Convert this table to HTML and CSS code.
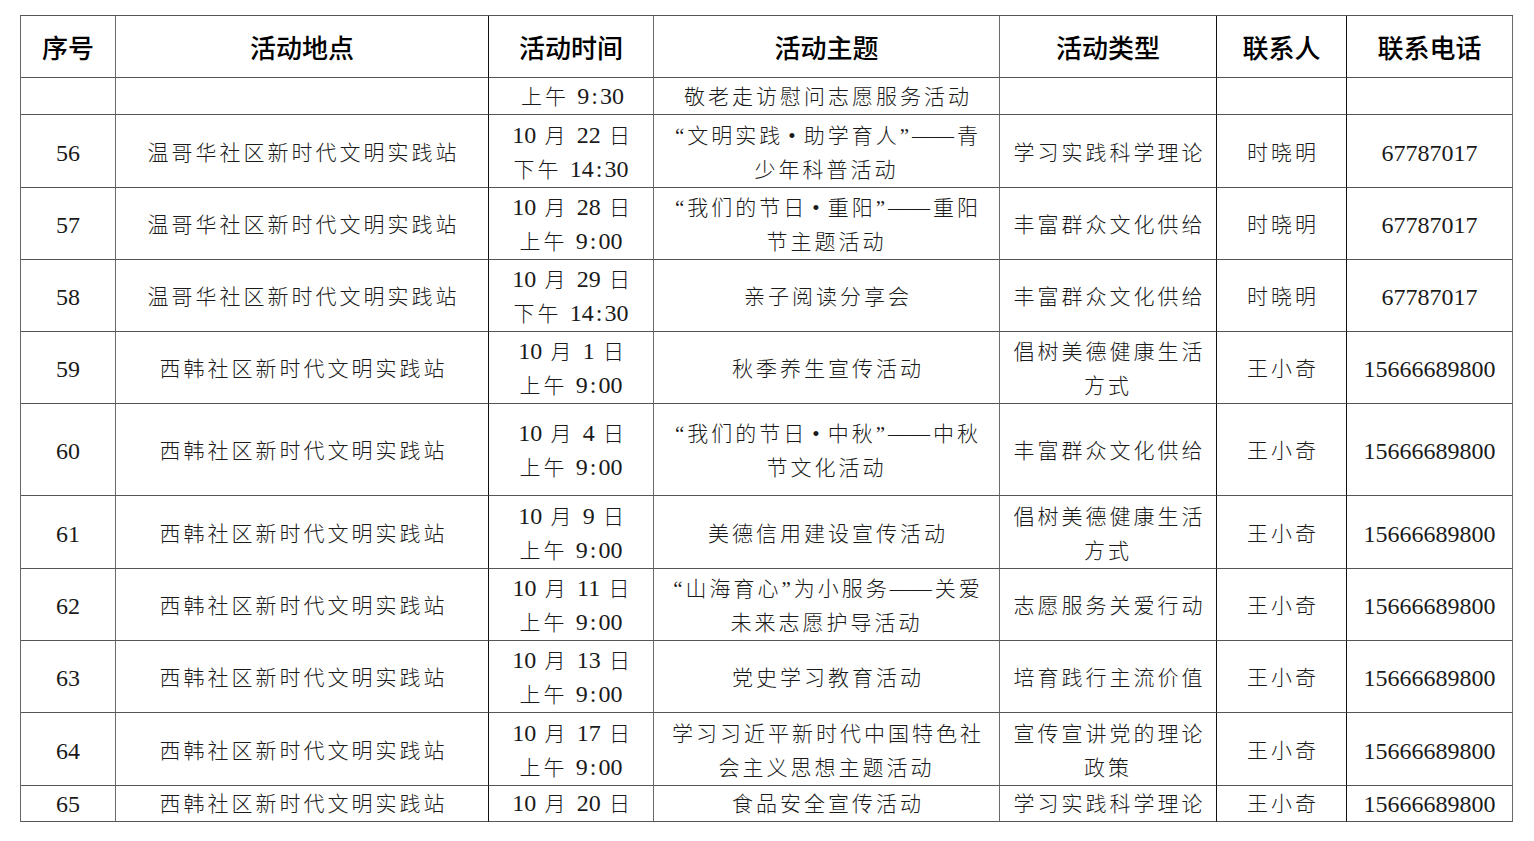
FILE: index.html
```html
<!DOCTYPE html>
<html lang="zh-CN">
<head>
<meta charset="utf-8">
<title>活动安排表</title>
<link rel="stylesheet" href="styles.css">
</head>
<body>
<table class="sheet">
  <colgroup>
    <col class="c1"><col class="c2"><col class="c3"><col class="c4"><col class="c5"><col class="c6"><col class="c7">
  </colgroup>
  <thead>
    <tr class="h-head">
      <th class="g">序号</th><th class="k">活动地点</th><th class="g">活动时间</th><th class="g">活动主题</th><th class="k">活动类型</th><th class="k">联系人</th><th class="g">联系电话</th>
    </tr>
  </thead>
  <tbody>
    <tr class="h37">
      <td class="g num"></td><td class="k"></td><td class="g">上午 <span class="n">9<i>:</i>30</span></td><td class="g">敬老走访慰问志愿服务活动</td><td class="k"></td><td class="k"></td><td class="g num"></td>
    </tr>
    <tr class="h73">
      <td class="g num">56</td><td class="k">温哥华社区新时代文明实践站</td><td class="g"><span class="n">10</span> 月 <span class="n">22</span> 日<br>下午 <span class="n">14<i>:</i>30</span></td><td class="g">“文明实践<span class="d">•</span>助学育人”<span class="m">——</span>青<br>少年科普活动</td><td class="k">学习实践科学理论</td><td class="k">时晓明</td><td class="g num">67787017</td>
    </tr>
    <tr class="h72">
      <td class="g num">57</td><td class="k">温哥华社区新时代文明实践站</td><td class="g"><span class="n">10</span> 月 <span class="n">28</span> 日<br>上午 <span class="n">9<i>:</i>00</span></td><td class="g">“我们的节日<span class="d">•</span>重阳”<span class="m">——</span>重阳<br>节主题活动</td><td class="k">丰富群众文化供给</td><td class="k">时晓明</td><td class="g num">67787017</td>
    </tr>
    <tr class="h72">
      <td class="g num">58</td><td class="k">温哥华社区新时代文明实践站</td><td class="g"><span class="n">10</span> 月 <span class="n">29</span> 日<br>下午 <span class="n">14<i>:</i>30</span></td><td class="g">亲子阅读分享会</td><td class="k">丰富群众文化供给</td><td class="k">时晓明</td><td class="g num">67787017</td>
    </tr>
    <tr class="h72">
      <td class="g num">59</td><td class="k">西韩社区新时代文明实践站</td><td class="g"><span class="n">10</span> 月 <span class="n">1</span> 日<br>上午 <span class="n">9<i>:</i>00</span></td><td class="g">秋季养生宣传活动</td><td class="k">倡树美德健康生活<br>方式</td><td class="k">王小奇</td><td class="g num">15666689800</td>
    </tr>
    <tr class="h92">
      <td class="g num">60</td><td class="k">西韩社区新时代文明实践站</td><td class="g"><span class="n">10</span> 月 <span class="n">4</span> 日<br>上午 <span class="n">9<i>:</i>00</span></td><td class="g">“我们的节日<span class="d">•</span>中秋”<span class="m">——</span>中秋<br>节文化活动</td><td class="k">丰富群众文化供给</td><td class="k">王小奇</td><td class="g num">15666689800</td>
    </tr>
    <tr class="h73">
      <td class="g num">61</td><td class="k">西韩社区新时代文明实践站</td><td class="g"><span class="n">10</span> 月 <span class="n">9</span> 日<br>上午 <span class="n">9<i>:</i>00</span></td><td class="g">美德信用建设宣传活动</td><td class="k">倡树美德健康生活<br>方式</td><td class="k">王小奇</td><td class="g num">15666689800</td>
    </tr>
    <tr class="h72">
      <td class="g num">62</td><td class="k">西韩社区新时代文明实践站</td><td class="g"><span class="n">10</span> 月 <span class="n">11</span> 日<br>上午 <span class="n">9<i>:</i>00</span></td><td class="g">“山海育心”为小服务<span class="m">——</span>关爱<br>未来志愿护导活动</td><td class="k">志愿服务关爱行动</td><td class="k">王小奇</td><td class="g num">15666689800</td>
    </tr>
    <tr class="h72">
      <td class="g num">63</td><td class="k">西韩社区新时代文明实践站</td><td class="g"><span class="n">10</span> 月 <span class="n">13</span> 日<br>上午 <span class="n">9<i>:</i>00</span></td><td class="g">党史学习教育活动</td><td class="k">培育践行主流价值</td><td class="k">王小奇</td><td class="g num">15666689800</td>
    </tr>
    <tr class="h73">
      <td class="g num">64</td><td class="k">西韩社区新时代文明实践站</td><td class="g"><span class="n">10</span> 月 <span class="n">17</span> 日<br>上午 <span class="n">9<i>:</i>00</span></td><td class="g">学习习近平新时代中国特色社<br>会主义思想主题活动</td><td class="k">宣传宣讲党的理论<br>政策</td><td class="k">王小奇</td><td class="g num">15666689800</td>
    </tr>
    <tr class="h36">
      <td class="g num">65</td><td class="k">西韩社区新时代文明实践站</td><td class="g"><span class="n">10</span> 月 <span class="n">20</span> 日</td><td class="g">食品安全宣传活动</td><td class="k">学习实践科学理论</td><td class="k">王小奇</td><td class="g num">15666689800</td>
    </tr>
  </tbody>
</table>
</body>
</html>
```

FILE: styles.css
```css
html, body {
  margin: 0;
  padding: 0;
  background: #ffffff;
}

.sheet {
  margin: 15px 0 0 20px;
  width: 1493px;
  table-layout: fixed;
  border-collapse: separate;
  border-spacing: 0;
  border-top: 1px solid #555;
  border-left: 1px solid #666;
  color: #111;
}

.c1 { width: 95px; }
.c2 { width: 373px; }
.c3 { width: 165px; }
.c4 { width: 346px; }
.c5 { width: 217px; }
.c6 { width: 130px; }
.c7 { width: 166px; }

th, td {
  padding: 0;
  text-align: center;
  vertical-align: middle;
  border-bottom: 1px solid #555;
  white-space: nowrap;
  overflow: hidden;
}

td.g, th.g { border-right: 1px solid #6a6a6a; }
td.k, th.k { border-right: 1px solid #111; }

th {
  font-family: "Noto Sans CJK SC", "Noto Sans", sans-serif;
  font-weight: 500;
  font-size: 26px;
  line-height: 30px;
  color: #000;
}

td {
  font-family: "Liberation Serif", "Noto Sans CJK SC", serif;
  font-weight: 300;
  font-size: 21px;
  line-height: 34px;
  letter-spacing: 3px;
  text-indent: 3px;
  padding-top: 3px;
  color: #1a1a1a;
}

.h37 td,
.h36 td {
  padding-top: 1px;
}

td.num {
  font-size: 24px;
  letter-spacing: 0;
  text-indent: 0;
  font-weight: 400;
}

.n {
  font-size: 24px;
  line-height: 1;
  letter-spacing: 0;
  font-weight: 400;
}

.n i {
  font-style: normal;
  padding: 0 2px;
}

.d {
  padding: 0 5px;
}

.m {
  letter-spacing: 0;
  padding-right: 3px;
}

.h-head { height: 62px; }
.h37 { height: 37px; }
.h36 { height: 36px; }
.h72 { height: 72px; }
.h73 { height: 73px; }
.h92 { height: 92px; }
```
